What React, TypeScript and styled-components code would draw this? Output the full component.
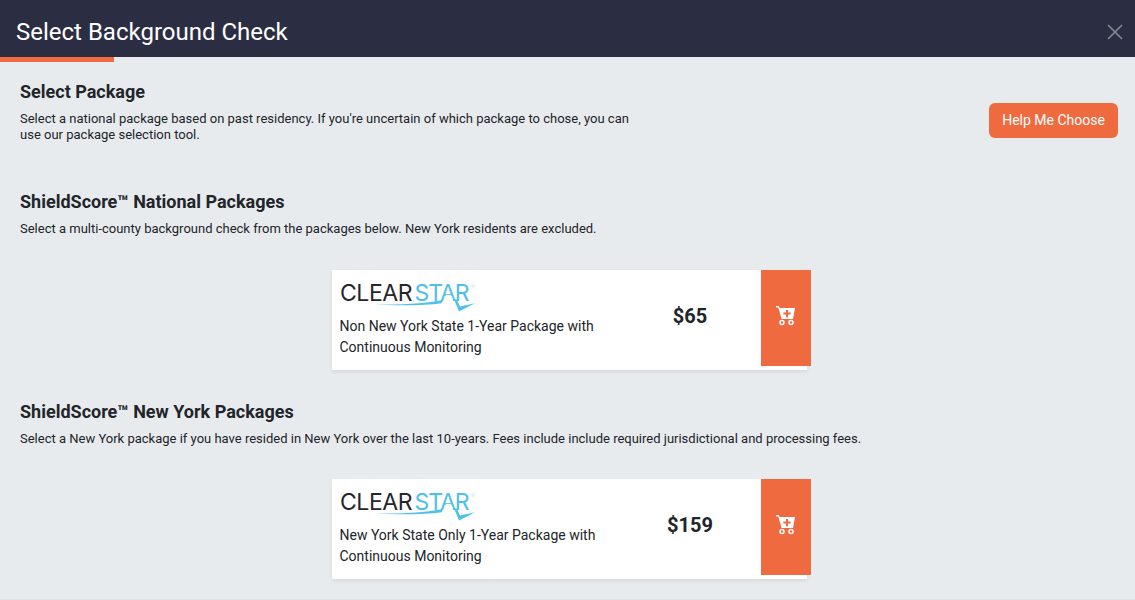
import React from "react";
import styled, { createGlobalStyle } from "styled-components";

const Global = createGlobalStyle`
  html, body { margin: 0; padding: 0; background: #e8ebee; }
  body { font-family: Roboto, "Liberation Sans", sans-serif; color: #212529; }
`;

const Page = styled.div`
  width: 1135px;
  height: 600px;
  box-sizing: border-box;
  overflow: hidden;
  background: #e8ebee;
  border-bottom: 1px solid #e0e3e6;
`;

const Header = styled.header`
  position: relative;
  height: 57px;
  background: #2b2e42;
  display: flex;
  align-items: center;
  justify-content: space-between;
  padding: 6px 12px 0 16px;
  box-sizing: border-box;
  &::after {
    content: "";
    position: absolute;
    left: 0;
    top: 57px;
    width: 114px;
    height: 5px;
    background: #ef6a3e;
  }
`;

const Title = styled.h1`
  margin: 0;
  font-size: 24px;
  font-weight: 400;
  line-height: 28px;
  color: #fff;
`;

const Close = styled.button`
  padding: 0;
  border: 0;
  background: none;
  width: 16px;
  height: 16px;
  display: flex;
  color: #85868f;
`;

const Main = styled.main`
  padding: 24px 17px 0 20px;
`;

const TopRow = styled.section`
  display: flex;
  justify-content: space-between;
  align-items: flex-start;
  height: 110px;
`;

const Heading = styled.h2`
  margin: 0 0 9px;
  font-size: 18px;
  line-height: 21px;
  font-weight: 700;
  color: #212529;
`;

const Intro = styled.p`
  margin: 0;
  width: 625px;
  font-size: 13px;
  line-height: 16px;
  color: #212529;
`;

const Help = styled.button`
  margin-top: 22px;
  width: 129px;
  height: 35px;
  padding: 0;
  border: 0;
  border-radius: 6px;
  background: #ef6a3e;
  color: #fff;
  font: 400 14px/35px Roboto, sans-serif;
`;

const Section = styled.section<{ $gap: number }>`
  margin-bottom: ${(p) => p.$gap}px;
`;

const Desc = styled.p<{ $gap: number }>`
  margin: 0 0 ${(p) => p.$gap}px;
  font-size: 13px;
  line-height: 16px;
  color: #212529;
`;

const Card = styled.article`
  position: relative;
  width: 475px;
  height: 100px;
  margin-left: 312px;
  box-sizing: border-box;
  background: #fff;
  box-shadow: 0 2px 4px rgba(0, 0, 0, 0.08);
  display: flex;
  padding: 5px 0 0 7.5px;
`;

const Info = styled.div`
  width: 290.5px;
  display: flex;
  flex-direction: column;
`;

const PackageName = styled.p`
  margin: 3px 0 0;
  font-size: 14px;
  line-height: 21px;
  color: #212529;
`;

const Price = styled.div`
  width: 120px;
  margin-top: 28px;
  font-size: 20px;
  line-height: 26px;
  font-weight: 700;
  text-align: center;
  color: #212529;
`;

const Cart = styled.button`
  position: absolute;
  top: 0;
  right: -4px;
  width: 50px;
  height: 96px;
  padding: 0 0 4px;
  border: 0;
  background: #ef6a3e;
  display: flex;
  align-items: center;
  justify-content: center;
`;

const LogoSvg = styled.svg`
  display: block;
  width: 136px;
  height: 38px;
`;

const Logo = () => (
  <LogoSvg viewBox="0 -6 136 38">
    <text x="0" y="20" fontFamily="Inter, sans-serif" fontWeight="400" fontSize="23" textLength="72.5" lengthAdjust="spacing" fill="#26262a">
      CLEAR
    </text>
    <text x="74.5" y="20" fontFamily="Inter, sans-serif" fontWeight="400" fontSize="23" textLength="55" lengthAdjust="spacing" fill="#4fc0ec">
      STAR
    </text>
    <path d="M106 14H111L113.2 18.5H103.8Z" fill="#fff" />
    <path d="M34 23.6C60 23.6 85 22.6 100 19.4L103 19.4L101.6 22.3C85 24.6 60 24.8 34 23.6Z" fill="#4fc0ec" />
    <path d="M114 18.5L116.8 18.5L120 25.6L135 22.2L119 30.5L117 25.4Z" fill="#4fc0ec" />
    <circle cx="133" cy="5" r="1.3" fill="none" stroke="#9fd9f2" strokeWidth="0.5" />
  </LogoSvg>
);

const CartIcon = () => (
  <svg width="20" height="20" viewBox="0 0 20 20">
    <path d="M0 0h2.8l.9 2h15.3l-2 11H5.6L2.3 1.6H0z" fill="#fff" />
    <path d="M10 4h2v2.6h2.6v2H12v2.6h-2V8.6H7.4v-2H10z" fill="#ef6a3e" />
    <circle cx="6" cy="16.5" r="2" fill="none" stroke="#fff" strokeWidth="1.5" />
    <circle cx="15" cy="16.5" r="2" fill="none" stroke="#fff" strokeWidth="1.5" />
  </svg>
);

const packages = [
  {
    heading: "ShieldScore™ National Packages",
    desc: "Select a multi-county background check from the packages below. New York residents are excluded.",
    name: ["Non New York State 1-Year Package with", "Continuous Monitoring"],
    price: "$65",
    gap: 31,
    descGap: 33,
  },
  {
    heading: "ShieldScore™ New York Packages",
    desc: "Select a New York package if you have resided in New York over the last 10-years. Fees include include required jurisdictional and processing fees.",
    name: ["New York State Only 1-Year Package with", "Continuous Monitoring"],
    price: "$159",
    gap: 0,
    descGap: 32,
  },
];

export default function App() {
  return (
    <Page>
      <Global />
      <Header>
        <Title>Select Background Check</Title>
        <Close aria-label="Close">
          <svg width="16" height="16" viewBox="0 0 16 16">
            <path d="M1 1l14 14M15 1L1 15" stroke="currentColor" strokeWidth="1.7" fill="none" />
          </svg>
        </Close>
      </Header>
      <Main>
        <TopRow>
          <div>
            <Heading>Select Package</Heading>
            <Intro>
              Select a national package based on past residency. If you're uncertain of which package to chose, you can
              use our package selection tool.
            </Intro>
          </div>
          <Help>Help Me Choose</Help>
        </TopRow>
        {packages.map((p) => (
          <Section key={p.price} $gap={p.gap}>
            <Heading>{p.heading}</Heading>
            <Desc $gap={p.descGap}>{p.desc}</Desc>
            <Card>
              <Info>
                <Logo />
                <PackageName>
                  {p.name[0]}
                  <br />
                  {p.name[1]}
                </PackageName>
              </Info>
              <Price>{p.price}</Price>
              <Cart aria-label="Add to cart">
                <CartIcon />
              </Cart>
            </Card>
          </Section>
        ))}
      </Main>
    </Page>
  );
}
